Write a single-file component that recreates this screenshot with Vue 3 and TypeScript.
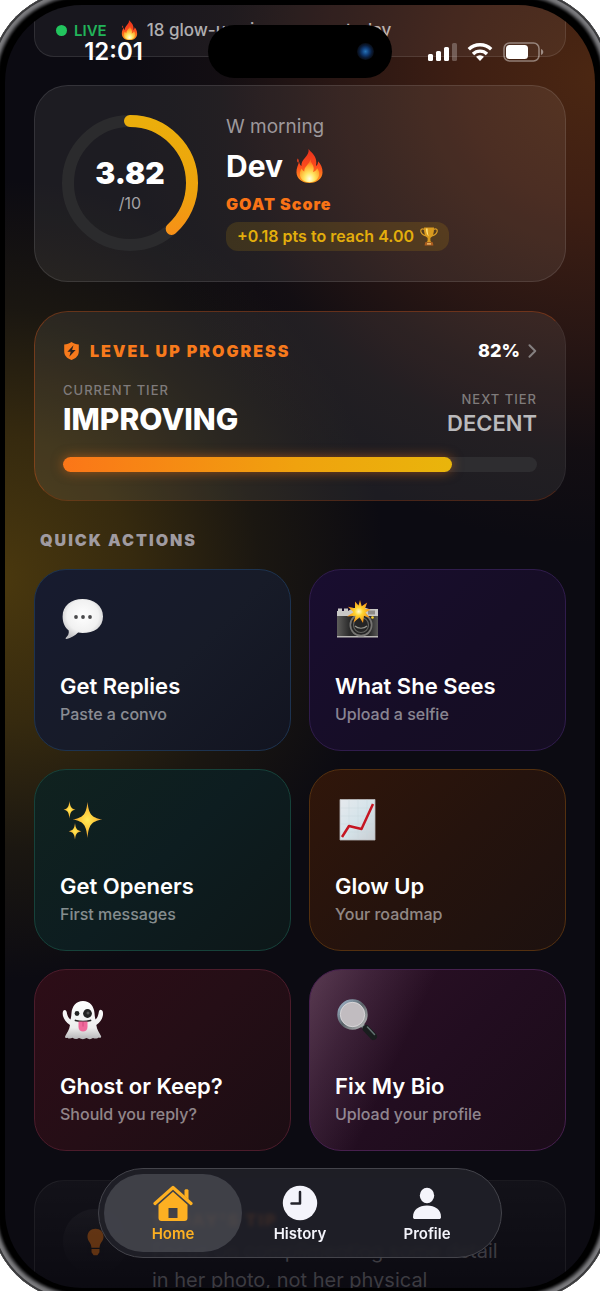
<script setup lang="ts">
import { computed } from 'vue'

interface Action {
  icon: 'chat' | 'camera' | 'sparkles' | 'chart' | 'ghost' | 'magnifier'
  title: string
  hint: string
}

const actions: Action[] = [
  { icon: 'chat', title: 'Get Replies', hint: 'Paste a convo' },
  { icon: 'camera', title: 'What She Sees', hint: 'Upload a selfie' },
  { icon: 'sparkles', title: 'Get Openers', hint: 'First messages' },
  { icon: 'chart', title: 'Glow Up', hint: 'Your roadmap' },
  { icon: 'ghost', title: 'Ghost or Keep?', hint: 'Should you reply?' },
  { icon: 'magnifier', title: 'Fix My Bio', hint: 'Upload your profile' },
]

const score = 3.82
const progress = 82
const circumference = 2 * Math.PI * 62
const arc = computed(() => `${(score / 10) * circumference} ${circumference}`)
</script>

<template>
  <div class="device">
    <main class="screen">
      <div class="content">
        <section class="card live">
          <span class="live-dot"></span>
          <strong>LIVE</strong>
          <svg class="flame-small" viewBox="0 0 30 36" aria-hidden="true">
            <use href="#flame" />
          </svg>
          <span class="live-text">18 glow-ups in progress today</span>
        </section>

        <section class="card score">
          <div class="ring">
            <svg viewBox="0 0 136 136" aria-hidden="true">
              <defs>
                <linearGradient id="ringFill" gradientUnits="userSpaceOnUse" x1="130" y1="0" x2="11" y2="0">
                  <stop offset="0" stop-color="#ebae0b" />
                  <stop offset=".6" stop-color="#eea30d" />
                  <stop offset="1" stop-color="#f88d19" />
                </linearGradient>
              </defs>
              <circle cx="68" cy="68" r="62" fill="none" stroke="#2b2b2d" stroke-width="12" />
              <circle
                cx="68" cy="68" r="62" fill="none" stroke="url(#ringFill)" stroke-width="12"
                stroke-linecap="round" :stroke-dasharray="arc" transform="rotate(-90 68 68)"
              />
            </svg>
            <div class="ring-label">
              <strong>{{ score }}</strong>
              <span>/10</span>
            </div>
          </div>
          <div class="intro">
            <p class="greeting">W morning</p>
            <h1>
              Dev
              <svg viewBox="0 0 30 36" aria-hidden="true">
                <defs>
                  <linearGradient id="flameOuter" x1="0" y1="0" x2="0" y2="1">
                    <stop offset="0" stop-color="#e8301c" />
                    <stop offset=".5" stop-color="#fb4b1d" />
                    <stop offset="1" stop-color="#ffa01f" />
                  </linearGradient>
                  <radialGradient id="flameInner" cx=".5" cy=".85" r=".75">
                    <stop offset="0" stop-color="#fffde0" />
                    <stop offset=".35" stop-color="#ffe763" />
                    <stop offset=".75" stop-color="#ffa52a" />
                    <stop offset="1" stop-color="#ff6a20" />
                  </radialGradient>
                  <g id="flame">
                    <path fill="url(#flameOuter)" d="M14 0c2 3 7 6 8 12 .4 2 .3 4-.2 6 1.600-.8 2.200-2.500 2.200-5 3 3 5 7 4.800 12C28.500 31.500 23 36 15 36S1.500 31.500 1.200 25C1 20 3 17 4 13.500c.4 2 1 3.500 2.500 4.500C6 14.500 8 12 10.500 9 13 6 14.500 4 14 0zM2.500 10c1.300 1.500 1.400 3 .6 4.500C1.800 13.500 1.600 12 2.500 10z" />
                    <path fill="url(#flameInner)" d="M16 11c.5 4 3.500 5.500 3.500 9.500 0 1.500-.3 2.700-.8 3.800 2-.3 3.500-1.800 4.300-4 1.800 2 2.500 4.200 2.200 6.700C24.700 32 20.500 35.200 15 35.200S5 32 4.800 27c-.1-2.500.7-4.500 2-6.300.4 1.500 1.300 2.600 2.700 3.200-.5-5.400 5-7.400 6.500-12.900z" />
                  </g>
                </defs>
                <use href="#flame" />
              </svg>
            </h1>
            <p class="goat">GOAT Score</p>
            <p class="target">
              +0.18 pts to reach 4.00
              <svg viewBox="0 0 18 19" aria-hidden="true">
                <path fill="none" stroke="#d69a25" stroke-width="1.200" d="M4.500 2.500C2 1 .2 2.500 1 5c.7 2.200 3 3.500 5.500 4M13.500 2.500C16 1 17.800 2.500 17 5c-.7 2.200-3 3.500-5.500 4" />
                <path fill="#d99a1e" d="M4 .6h10c.2 5.500-1 9-3.600 10.400v2.400c0 1 1.100 1.600 2.200 2.200H5.400c1.100-.6 2.200-1.200 2.200-2.200V11C5 9.600 3.800 6.100 4 .6z" />
                <path fill="#ffe27a" d="M6 1.500h1.600c0 3.500.4 6 1.300 8C7 8.300 6 5.500 6 1.500z" />
                <path fill="#ad5d1e" d="M5.200 15.300h7.600l.6 3.300H4.600z" />
                <path fill="#f2c879" d="M7 16.300h4v1.200H7z" />
              </svg>
            </p>
          </div>
        </section>

        <section class="card level">
          <div class="level-head">
            <h2>
              <svg viewBox="0 0 16 18" aria-hidden="true">
                <path fill="#f77a1c" d="M8 0c2.300 1.500 4.600 2.200 7.300 2.500v6.700c0 4.300-2.700 7.100-7.300 8.800C3.400 16.300.7 13.500.7 9.200V2.500C3.400 2.200 5.700 1.500 8 0z" />
                <path fill="#2a2320" d="M10 3.200 3.900 9.800h3.300l-1.400 5 6.300-6.900H8.600z" />
              </svg>
              LEVEL UP PROGRESS
            </h2>
            <button type="button" class="details" aria-label="82% progress details">
              {{ progress }}%
              <svg viewBox="0 0 9 14" aria-hidden="true">
                <path d="m1.500 1.300 5.700 5.700-5.700 5.700" fill="none" stroke="#858080" stroke-width="2" stroke-linecap="round" stroke-linejoin="round" />
              </svg>
            </button>
          </div>
          <div class="tiers">
            <div>
              <p class="tier-label">CURRENT TIER</p>
              <p class="tier-now">IMPROVING</p>
            </div>
            <div class="tier-right">
              <p class="tier-label">NEXT TIER</p>
              <p class="tier-next">DECENT</p>
            </div>
          </div>
          <div class="bar" role="progressbar" :aria-valuenow="progress" aria-valuemin="0" aria-valuemax="100" aria-label="Level up progress">
            <div class="bar-fill" :style="{ width: progress + '%' }"></div>
          </div>
        </section>

        <h2 class="heading">QUICK ACTIONS</h2>
        <div class="grid">
          <button v-for="action in actions" :key="action.icon" type="button" class="tile" :class="action.icon">
            <svg v-if="action.icon === 'chat'" viewBox="0 0 44 44" aria-hidden="true">
              <defs>
                <radialGradient id="bubble" cx=".5" cy=".42" r=".6">
                  <stop offset="0" stop-color="#fff" />
                  <stop offset=".65" stop-color="#f1f1f1" />
                  <stop offset="1" stop-color="#c2c2c4" />
                </radialGradient>
              </defs>
              <path fill="url(#bubble)" d="M22.500 2C34 2 43 8.500 43 19.500S34 36 22.500 36c-1.600 0-3-.1-4.400-.4C15 38.500 11 41.500 6.600 42c-1.200.1-1.300-.7-.5-1.400 2-1.900 3.100-4.300 2.600-7.100C5 30.500 2.600 26 2.600 19.500 2.600 8.500 11 2 22.500 2z" />
              <g fill="#4a4a4c"><circle cx="16" cy="20" r="1.900" /><circle cx="23" cy="20" r="1.900" /><circle cx="30" cy="20" r="1.900" /></g>
            </svg>
            <svg v-else-if="action.icon === 'camera'" viewBox="0 0 44 44" aria-hidden="true">
              <defs>
                <linearGradient id="body" x1="0" y1="0" x2="1" y2="0">
                  <stop offset="0" stop-color="#5e5d5b" /><stop offset=".3" stop-color="#2b2b2b" /><stop offset=".8" stop-color="#2b2b2b" /><stop offset="1" stop-color="#595957" />
                </linearGradient>
                <radialGradient id="burst" cx=".5" cy=".5" r=".5">
                  <stop offset="0" stop-color="#fffbd0" /><stop offset=".35" stop-color="#ffd52f" /><stop offset="1" stop-color="#f38a13" />
                </radialGradient>
              </defs>
              <path fill="#c9c8c6" d="M2 14h1v-2.500h4V14h2v-2.500h4V14l5-3h13l3 1h9v8H2z" />
              <path fill="url(#body)" d="M2 19h41v21H2z" />
              <path fill="#b9b7b4" d="M2 39h41v1.500H2z" />
              <path fill="#8e8b86" d="M33 13.500h7v4h-7z" />
              <circle cx="26" cy="28" r="11.500" fill="#777673" />
              <circle cx="26" cy="28" r="9.800" fill="#242424" />
              <circle cx="26" cy="28" r="7.500" fill="none" stroke="#62625f" stroke-width="1.200" />
              <path d="M20 29c3 3 9 3 12 0" fill="none" stroke="#96968f" stroke-width="1.200" />
              <circle cx="37.500" cy="20.500" r="1.300" fill="#ffd52f" />
              <path fill="url(#burst)" d="m25 3 1.700 6.200 5.500-3.700-2.200 6.300 5.500.7-5 3 4.500 5.500-6-2.300-1 7.300-3.500-5.700-6 5.200 2-6.700-8.500.7 6.500-4.300-5.500-5.500 7 1.500L20 4.500l3.500 4z" />
            </svg>
            <svg v-else-if="action.icon === 'sparkles'" viewBox="0 0 44 44" aria-hidden="true">
              <defs>
                <radialGradient id="spark"><stop offset="0" stop-color="#ffea57" /><stop offset=".5" stop-color="#fdc93b" /><stop offset="1" stop-color="#e59834" /></radialGradient>
              </defs>
              <g fill="url(#spark)">
                <path d="M27.500 5c1.300 11.500 3.300 15.700 15 17.500-11.700 1.800-13.700 6-15 18.500-1.300-12.500-3.300-16.700-15-18.500 11.700-1.800 13.700-6 15-17.500z" />
                <path d="M9.500 4c.7 5.600 1.600 7.800 6 8.600-4.400.9-5.300 3-6 9-.7-6-1.600-8.100-6-9 4.400-.8 5.300-3 6-8.600z" />
                <path d="M15 26c.7 5.400 1.600 7.300 6.300 8.200-4.700.9-5.600 2.800-6.300 8.400-.7-5.600-1.600-7.500-6.300-8.400 4.700-.9 5.600-2.800 6.300-8.200z" />
              </g>
            </svg>
            <svg v-else-if="action.icon === 'chart'" viewBox="0 0 44 44" aria-hidden="true">
              <defs>
                <linearGradient id="paper" x1="0" y1="0" x2="1" y2="1"><stop offset="0" stop-color="#e6e9ed" /><stop offset=".5" stop-color="#d5e4ea" /><stop offset="1" stop-color="#c9cdd2" /></linearGradient>
              </defs>
              <path fill="url(#paper)" stroke="#b7b8ba" stroke-width=".8" d="M5 2.500h35v40.500H5z" />
              <path stroke="#c8d5db" stroke-width=".4" d="M5 11h35M5 19h35M5 27h35M5 35h35M14 2.500V43M23 2.500V43M32 2.500V43" />
              <path d="m7 40 7-11 12.500 3L38 7" fill="none" stroke="#c51622" stroke-width="2.500" stroke-linejoin="round" />
            </svg>
            <svg v-else-if="action.icon === 'ghost'" viewBox="0 0 44 44" aria-hidden="true">
              <defs>
                <linearGradient id="sheet" x1="0" y1="0" x2="0" y2="1"><stop offset="0" stop-color="#fff" /><stop offset=".7" stop-color="#ededed" /><stop offset="1" stop-color="#b6b6b8" /></linearGradient>
              </defs>
              <path fill="url(#sheet)" d="M23 4c7 0 11 5.500 11.500 12 .2 2.500.4 4.500 1 6.500 2-1.500 2.800-4.500 3.300-7.500.5-2.500 2-2.800 3.300-1.500 2.200 2.500.7 10.500-5.800 14.500.5 4.500 3 7.500 4.700 11 .5 1.500-.5 2.300-2.300 1.500-1.500 1.500-4 1.300-5.700.5-2 1.500-4.300 1.500-6.500 0-2.200 1.500-5 1.500-7.500 0-2.200 1.500-4.500 1-6.500-.3-1.500 1-4 1.200-5 0-1.800.8-3 .2-2.200-1.700 1.700-3.500 4.200-6.500 4.700-11C3.500 24 1.500 17 3.300 13.800c1.200-1.600 2.900-1 3.400 1.200.5 3 1.500 6 3.800 7.500.6-2 .8-4 1-6.500C12 9.500 16 4 23 4z" />
              <circle cx="17" cy="16.500" r="2.400" fill="#222" /><circle cx="27.500" cy="16.500" r="4.400" fill="#222" /><circle cx="28" cy="16" r="1.500" fill="#555" />
              <path d="M15.500 23.500c4 1.200 11 1.200 15 0" fill="none" stroke="#252323" stroke-width="1.800" stroke-linecap="round" />
              <path fill="#f0699b" d="M18.500 24.500h9V30c0 6-9 6-9 0z" /><path d="M23 25v4.500" stroke="#cf467c" stroke-width=".9" />
            </svg>
            <svg v-else viewBox="0 0 44 44" aria-hidden="true">
              <defs>
                <linearGradient id="rim" x1="0" y1="0" x2="1" y2="1"><stop offset="0" stop-color="#a5bdd3" /><stop offset=".5" stop-color="#5a6268" /><stop offset="1" stop-color="#c1c2c1" /></linearGradient>
              </defs>
              <path stroke="#7c898c" stroke-width="4" d="m27 28 4 4" />
              <path stroke="#191d1e" stroke-width="7" stroke-linecap="round" d="m31 31.500 7.500 8" />
              <path stroke="#617070" stroke-width="1.500" stroke-linecap="round" d="m32.500 30 7 7.500" />
              <circle cx="17.500" cy="17.500" r="13.800" fill="#c1bcc0" stroke="url(#rim)" stroke-width="2.800" />
              <circle cx="17.500" cy="17.500" r="12.200" fill="none" stroke="#e2e1e3" stroke-width=".7" />
            </svg>
            <span class="tile-title">{{ action.title }}</span>
            <span class="tile-hint">{{ action.hint }}</span>
          </button>
        </div>

        <section class="tip">
          <div class="tip-icon">
            <svg viewBox="0 0 18 28" aria-hidden="true">
              <path fill="#b0570f" d="M9 0c5 0 8.500 3.500 8.500 8.300 0 5.200-4.200 6.700-4.200 11.700H4.700C4.700 15 .5 13.500.5 8.300.5 3.500 4 0 9 0zM4.800 21.500h8.400v3.300L11 28H7l-2.200-3.200z" />
            </svg>
          </div>
          <div>
            <h2>TODAY'S TIP</h2>
            <p>Focus on complimenting some detail in her photo, not her physical</p>
          </div>
        </section>
      </div>

      <header class="status">
        <time>12:01</time>
        <div class="island"><span class="lens"></span></div>
        <div class="signals">
          <svg width="30" height="20" viewBox="0 0 30 20" role="img" aria-label="Signal">
            <g fill="#fff"><rect x="1" y="12" width="5" height="7" rx="1.500" /><rect x="9" y="9" width="5" height="10" rx="1.500" /><rect x="17" y="5" width="5" height="14" rx="1.500" /></g>
            <rect x="25" y="1" width="5" height="18" rx="1.500" fill="#fff" opacity=".25" />
          </svg>
          <svg width="26" height="20" viewBox="0 0 26 20" role="img" aria-label="Wi-Fi">
            <g fill="none" stroke="#fff" stroke-width="3.400"><path d="M1.800 7.300a16 16 0 0 1 22.400 0" /><path d="M6 12a10 10 0 0 1 14 0" /></g>
            <path fill="#fff" d="M9 14.800a6 6 0 0 1 8 0L13 19z" />
          </svg>
          <svg width="41" height="20" viewBox="0 0 41 20" role="img" aria-label="Battery">
            <rect x="1" y="1" width="35" height="18" rx="5.500" fill="none" stroke="#fff" stroke-opacity=".42" stroke-width="1.500" />
            <rect x="3" y="3" width="22" height="14" rx="3.500" fill="#fff" /><path fill="#fff" opacity=".45" d="M38 7c3 1 3 5 0 6z" />
          </svg>
        </div>
      </header>

      <nav class="tabs" aria-label="Main">
        <a href="#home" class="tab active" aria-current="page">
          <svg viewBox="0 0 40 36" aria-hidden="true">
            <path d="m2 18.500 18-16 18 16" fill="none" stroke="#fdb022" stroke-width="3.200" stroke-linecap="round" stroke-linejoin="round" />
            <path fill="#fdb022" d="M31.500 5.500c0-1.800 4-1.800 4 0v9l-4-3.500z" />
            <path fill="#fdb022" fill-rule="evenodd" d="m20 6.800 14.500 13V33a3 3 0 0 1-3 3h-23a3 3 0 0 1-3-3V19.800zM15.500 23v10h9V23z" />
          </svg>
          Home
        </a>
        <a href="#history" class="tab">
          <svg viewBox="0 0 40 36" aria-hidden="true">
            <circle cx="20" cy="18" r="17.200" fill="#f4f4fb" />
            <path d="M20 7v11.500h-8.500" fill="none" stroke="#23232b" stroke-width="2.500" stroke-linecap="round" stroke-linejoin="round" />
          </svg>
          History
        </a>
        <a href="#profile" class="tab">
          <svg viewBox="0 0 40 36" aria-hidden="true">
            <ellipse cx="20" cy="10.500" rx="7.200" ry="7.700" fill="#f4f4fb" />
            <path fill="#f4f4fb" d="M6 32c0-7.500 6-11.500 14-11.500S34 24.500 34 32c0 1.500-.8 2-2 2H8c-1.200 0-2-.5-2-2z" />
          </svg>
          Profile
        </a>
      </nav>
    </main>
  </div>
</template>

<style>
html,
body {
  margin: 0;
  background: #fff;
}
</style>

<style scoped>
* {
  box-sizing: border-box;
}

h1,
h2,
p {
  margin: 0;
}

button {
  font: inherit;
  color: inherit;
  border: 0;
  background: none;
  padding: 0;
  text-align: left;
}

.device {
  position: relative;
  height: 100vh;
  padding: 5px 5px 3px;
  overflow: hidden;
  font-family: Inter, "Liberation Sans", sans-serif;
  color: #fff;
}

.device::before {
  content: "";
  position: absolute;
  inset: -10px;
  border-radius: 90px;
  background: #000;
  box-shadow: inset 0 0 0 2px #3c3c3e, inset 0 0 3px 6px #7b7b7e, inset 0 0 2px 8px #202022;
}

.screen {
  position: relative;
  height: 100%;
  overflow: hidden;
  border-radius: 77px;
  background:
    radial-gradient(circle 470px at 100% 70px, rgba(124, 60, 18, 0.56), rgba(112, 50, 20, 0.5) 28%, rgba(92, 42, 22, 0.36) 55%, rgba(60, 32, 20, 0.14) 80%, transparent),
    radial-gradient(ellipse 390px 400px at -10px 575px, rgba(104, 78, 12, 0.68), rgba(92, 70, 12, 0.52) 36%, rgba(68, 56, 14, 0.26) 68%, transparent),
    #0c0b12;
}

.content {
  display: flex;
  flex-direction: column;
  padding: 0 29px;
}

.card {
  border: 1px solid rgba(255, 255, 255, 0.1);
  border-radius: 34px;
  background: rgba(255, 255, 255, 0.07);
}

.live {
  display: flex;
  flex-shrink: 0;
  align-items: center;
  height: 82px;
  margin-top: -30px;
  padding: 28px 21px 0;
  border-radius: 20px;
  background: rgba(255, 255, 255, 0.05);
}

.live-dot {
  width: 11px;
  height: 11px;
  margin-right: 7px;
  border-radius: 50%;
  background: #22c55e;
}

.live strong {
  color: #22b45a;
  font-size: 15px;
  font-weight: 600;
}

.flame-small {
  width: 17px;
  height: 20px;
  margin: 0 9px 0 14px;
}

.live-text {
  color: rgba(255, 255, 255, 0.66);
  font-size: 17px;
  font-weight: 500;
  white-space: nowrap;
}

.score {
  display: flex;
  gap: 28px;
  margin-top: 28px;
  padding: 29px 27px 30px;
}

.ring {
  display: grid;
  flex: none;
  width: 136px;
  height: 136px;
}

.ring > * {
  grid-area: 1 / 1;
}

.ring-label {
  display: flex;
  flex-direction: column;
  align-items: center;
  padding-top: 38px;
}

.ring-label strong {
  font-size: 30px;
  line-height: 40px;
  font-weight: 900;
}

.ring-label span {
  color: #a3a1a4;
  font-size: 16px;
  line-height: 20px;
}

.intro {
  display: flex;
  flex-direction: column;
  align-items: flex-start;
  gap: 7px;
}

.greeting {
  color: #9d989b;
  font-size: 19px;
  line-height: 24px;
}

h1 {
  display: flex;
  align-items: center;
  gap: 12px;
  font-size: 30px;
  line-height: 40px;
  font-weight: 700;
}

h1 svg {
  width: 29px;
  height: 34px;
}

.goat {
  color: #f97316;
  font-size: 16px;
  line-height: 22px;
  font-weight: 900;
  letter-spacing: 1px;
}

.target {
  display: flex;
  align-items: center;
  gap: 6px;
  padding: 0 11px;
  border-radius: 12px;
  background: rgba(234, 179, 8, 0.14);
  color: #e3ae0c;
  font-size: 16px;
  line-height: 29px;
  font-weight: 600;
}

.target svg {
  width: 18px;
  height: 19px;
}

.level {
  display: flex;
  flex-direction: column;
  gap: 19px;
  margin-top: 29px;
  padding: 28px;
  border-color: rgba(195, 90, 40, 0.45) rgba(255, 255, 255, 0.12) rgba(165, 80, 40, 0.4) rgba(195, 90, 40, 0.5);
  background-clip: padding-box;
}

.level-head,
.tiers {
  display: flex;
  justify-content: space-between;
}

.level-head {
  align-items: center;
  line-height: 22px;
}

.level-head h2 {
  display: flex;
  align-items: center;
  gap: 10px;
  color: #f77a1c;
  font-size: 16px;
  font-weight: 900;
  letter-spacing: 2px;
}

.level-head h2 svg {
  width: 17px;
  height: 18px;
}

.details {
  display: flex;
  align-items: center;
  gap: 8px;
  font-size: 18px;
  font-weight: 800;
}

.details svg {
  width: 9px;
  height: 14px;
}

.tiers {
  align-items: flex-end;
}

.tier-label {
  color: #7f7b7b;
  font-size: 13px;
  line-height: 18px;
  font-weight: 500;
  letter-spacing: 1px;
}

.tier-now {
  padding-top: 2px;
  font-size: 30px;
  line-height: 37px;
  font-weight: 800;
}

.tier-right {
  text-align: right;
}

.tier-next {
  color: #bababc;
  font-size: 22px;
  line-height: 30px;
  font-weight: 600;
}

.bar {
  height: 15px;
  border-radius: 8px;
  background: #2e2d30;
}

.bar-fill {
  height: 100%;
  border-radius: 8px;
  background: linear-gradient(90deg, #fb7618, #f0a20e 60%, #e9b50b);
  box-shadow: 0 0 12px rgba(249, 115, 22, 0.5);
}

.heading {
  margin: 27px 6px 17px;
  color: #a09ba1;
  font-size: 16px;
  line-height: 24px;
  font-weight: 900;
  letter-spacing: 2px;
}

.grid {
  display: grid;
  grid-template-columns: 1fr 1fr;
  gap: 18px;
}

.tile {
  display: flex;
  flex-direction: column;
  padding: 27px 25px 25px;
  border: 1px solid;
  border-radius: 32px;
}

.tile svg {
  width: 44px;
  height: 44px;
  margin-bottom: 31px;
}

.tile-title {
  font-size: 22px;
  line-height: 28px;
  font-weight: 600;
}

.tile-hint {
  padding-top: 3px;
  color: rgba(255, 255, 255, 0.5);
  font-size: 16px;
  line-height: 22px;
  font-weight: 500;
}

.chat {
  border-color: #1d3350;
  background: linear-gradient(135deg, #171b2f, #171b28 55%, #121420);
}

.camera {
  border-color: #301c4c;
  background: linear-gradient(135deg, #190d30, #160d26 55%, #150d22);
}

.sparkles {
  border-color: #16423a;
  background: linear-gradient(135deg, #10221f, #0d1d20 50%, #0d1718);
}

.chart {
  border-color: #54300f;
  background: linear-gradient(135deg, #30160a, #25130d 50%, #1d110f);
}

.ghost {
  border-color: #4c1c2b;
  background: linear-gradient(135deg, #2d0d17, #250e16 50%, #1c0d13);
}

.magnifier {
  border-color: #47204e;
  background:
    linear-gradient(115deg, rgba(150, 115, 140, 0.42), rgba(130, 95, 125, 0.24) 18%, transparent 38%),
    linear-gradient(135deg, #2d1126, #220d20 50%, #1b0c19);
}

.tip {
  display: flex;
  gap: 24px;
  height: 170px;
  margin-top: 29px;
  padding: 28px 48px 28px 28px;
  border: 1px solid rgba(255, 255, 255, 0.06);
  border-radius: 30px;
  background: linear-gradient(rgba(255, 255, 255, 0.03), transparent 70%);
}

.tip-icon {
  display: grid;
  flex: none;
  place-items: center;
  width: 65px;
  height: 65px;
  border-radius: 32px;
  background: linear-gradient(rgba(255, 255, 255, 0.03), transparent);
}

.tip-icon svg {
  width: 17px;
  height: 28px;
  opacity: 0.5;
}

.tip h2 {
  color: #f97316;
  font-size: 16px;
  line-height: 22px;
  font-weight: 900;
  letter-spacing: 2px;
}

.tip p {
  padding-top: 6px;
  color: #3c3b41;
  font-size: 20px;
  line-height: 29px;
}

.status {
  position: absolute;
  top: 20px;
  left: 0;
  right: 0;
  display: grid;
  grid-template-columns: 1fr 184px 1fr;
  align-items: center;
}

time {
  padding-left: 14px;
  text-align: center;
  font-size: 24px;
  line-height: 28px;
  font-weight: 600;
}

.island {
  display: flex;
  align-items: center;
  justify-content: flex-end;
  height: 53px;
  padding-right: 18px;
  border-radius: 27px;
  background: #000;
}

.lens {
  width: 17px;
  height: 17px;
  border-radius: 50%;
  background: radial-gradient(circle, #2672b5 0, #103c76 30%, #0a1c38 52%, #080b12 72%);
}

.signals {
  display: flex;
  align-items: center;
  justify-content: center;
  gap: 10px;
  padding-right: 16px;
}

.tabs {
  position: absolute;
  right: 93px;
  bottom: 30px;
  left: 93px;
  display: grid;
  grid-template-columns: 138fr 116fr 138fr;
  padding: 5px;
  border: 1px solid #44444b;
  border-radius: 45px;
  background: rgba(32, 32, 40, 0.9);
  backdrop-filter: blur(2px);
}

.tab {
  display: flex;
  flex-direction: column;
  align-items: center;
  gap: 3px;
  padding: 11px 0 8px;
  border-radius: 40px;
  color: #f4f4fb;
  font-size: 15px;
  line-height: 20px;
  font-weight: 600;
  text-decoration: none;
}

.tab svg {
  width: 40px;
  height: 36px;
}

.active {
  background: rgba(82, 83, 91, 0.65);
  color: #fdb022;
}
</style>
